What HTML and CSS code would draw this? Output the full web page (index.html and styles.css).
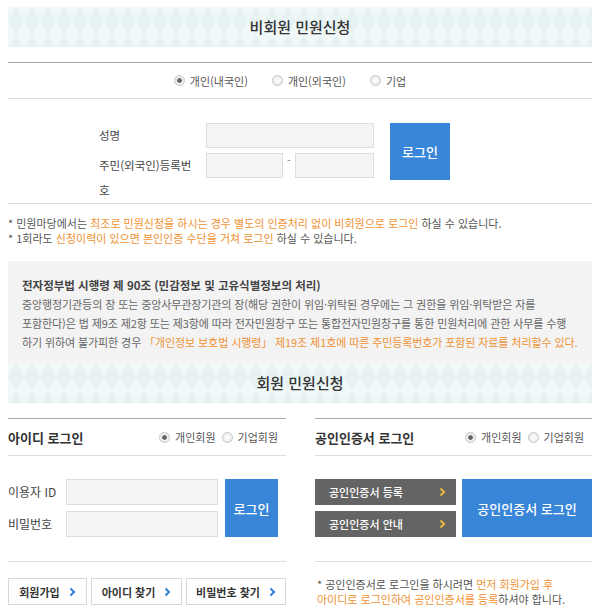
FILE: index.html
```html
<!DOCTYPE html>
<html lang="ko">
  <head>
    <meta charset="utf-8">
    <title>민원신청</title>
    <link rel="stylesheet" href="styles.css">
  </head>
  <body>
    <div class="band"><h2>비회원 민원신청</h2></div>

    <div class="type-row">
      <label class="opt"><span class="radio on"></span>개인(내국인)</label>
      <label class="opt"><span class="radio"></span>개인(외국인)</label>
      <label class="opt"><span class="radio"></span>기업</label>
    </div>

    <div class="nm-form">
      <span class="lbl name-lbl">성명</span>
      <span class="inp wide"></span>
      <a class="btn-blue nm-login">로그인</a>
      <span class="lbl jumin-lbl">주민(외국인)등록번<br>호</span>
      <span class="inp jumin-a"></span>
      <span class="dash">-</span>
      <span class="inp jumin-b"></span>
    </div>

    <ul class="notes">
      <li>* 민원마당에서는 <em>최조로 민원신청을 하시는 경우 별도의 인증처리 없이 비회원으로 로그인</em> 하실 수 있습니다.</li>
      <li>* 1회라도 <em>신청이력이 있으면 본인인증 수단을 거쳐 로그인</em> 하실 수 있습니다.</li>
    </ul>

    <div class="law">
      <strong>전자정부법 시행령 제 90조 (민감정보 및 고유식별정보의 처리)</strong><br>
      중앙행정기관등의 장 또는 중앙사무관장기관의 장(해당 권한이 위임·위탁된 경우에는 그 권한을 위임·위탁받은 자를<br>
      포함한다)은 법 제9조 제2항 또는 제3항에 따라 전자민원창구 또는 통합전자민원창구를 통한 민원처리에 관한 사무를 수행<br>
      하기 위하여 불가피한 경우 <em>「개인정보 보호법 시행령」 제19조 제1호에 따른 주민등록번호가 포함된 자료를 처리할수 있다.</em>
    </div>

    <div class="band"><h2>회원 민원신청</h2></div>

    <div class="members">
      <div class="panel">
        <div class="panel-head">
          <h3>아이디 로그인</h3>
          <div class="kinds">
            <label class="opt"><span class="radio on"></span>개인회원</label>
            <label class="opt"><span class="radio"></span>기업회원</label>
          </div>
        </div>
        <div class="panel-body id-form">
          <span class="lbl">이용자 ID</span>
          <span class="inp"></span>
          <a class="btn-blue id-login">로그인</a>
          <span class="lbl">비밀번호</span>
          <span class="inp"></span>
        </div>
        <div class="links">
          <a class="link-btn">회원가입 <svg width="7" height="10" viewBox="0 0 7 10"><polyline points="1.5,1.5 5,5 1.5,8.5" fill="none" stroke="#2f7fd4" stroke-width="2"/></svg></a>
          <a class="link-btn">아이디 찾기 <svg width="7" height="10" viewBox="0 0 7 10"><polyline points="1.5,1.5 5,5 1.5,8.5" fill="none" stroke="#2f7fd4" stroke-width="2"/></svg></a>
          <a class="link-btn">비밀번호 찾기 <svg width="7" height="10" viewBox="0 0 7 10"><polyline points="1.5,1.5 5,5 1.5,8.5" fill="none" stroke="#2f7fd4" stroke-width="2"/></svg></a>
        </div>
      </div>

      <div class="panel">
        <div class="panel-head">
          <h3>공인인증서 로그인</h3>
          <div class="kinds">
            <label class="opt"><span class="radio on"></span>개인회원</label>
            <label class="opt"><span class="radio"></span>기업회원</label>
          </div>
        </div>
        <div class="panel-body cert-form">
          <a class="btn-dark">공인인증서 등록 <svg width="7" height="10" viewBox="0 0 7 10"><polyline points="1.5,1.5 5,5 1.5,8.5" fill="none" stroke="#e6b73c" stroke-width="2"/></svg></a>
          <a class="btn-blue cert-login">공인인증서 로그인</a>
          <a class="btn-dark">공인인증서 안내 <svg width="7" height="10" viewBox="0 0 7 10"><polyline points="1.5,1.5 5,5 1.5,8.5" fill="none" stroke="#e6b73c" stroke-width="2"/></svg></a>
        </div>
        <p class="cert-note">* 공인인증서로 로그인을 하시려면 <em>먼저 회원가입 후<br>아이디로 로그인하여 공인인증서를 등록</em>하셔야 합니다.</p>
      </div>
    </div>
  </body>
</html>
```

FILE: styles.css
```css
body { margin: 7px 8px 0; font: normal 11px "Noto Sans CJK KR", "Noto Sans", sans-serif; color: #555; background: #fff; }
em { font-style: normal; color: #ef9233; }
a { cursor: pointer; }

.band { height: 40px; background-color: #e7f3f3; background-image: linear-gradient(60deg, #f0f8f8 25%, transparent 25.5%, transparent 75%, #f0f8f8 75.5%), linear-gradient(-60deg, #f0f8f8 25%, transparent 25.5%, transparent 75%, #f0f8f8 75.5%); background-size: 16px 28px; }
.band h2 { margin: 0; line-height: 40px; text-align: center; font-size: 15px; font-weight: 500; color: #333; }

.opt { display: inline-flex; align-items: center; gap: 5px; color: #555; }
.radio { width: 9px; height: 9px; border: 1px solid #c6c6c6; border-radius: 50%; background: radial-gradient(#fff, #e4e4e4); box-sizing: content-box; }
.radio.on { background: radial-gradient(circle, #666 0 2px, #eee 2.6px); }

.type-row { margin-top: 15px; height: 35px; border-top: 1px solid #a8a8a8; border-bottom: 1px solid #ddd; display: flex; justify-content: center; align-items: center; gap: 24px; padding-right: 20px; }

.nm-form { display: grid; grid-template-columns: 107px 77px 12px 79px 16px 60px; grid-template-rows: 25px 50px; row-gap: 5px; padding: 24px 0 0 91px; border-bottom: 1px solid #ddd; }
.nm-form .lbl { font-size: 11.5px; line-height: 25px; color: #444; }
.name-lbl { grid-column: 1; grid-row: 1; }
.jumin-lbl { grid-column: 1; grid-row: 2; }
.wide { grid-column: 2 / 5; grid-row: 1; }
.jumin-a { grid-column: 2; grid-row: 2; }
.dash { grid-column: 3; grid-row: 2; text-align: center; line-height: 14px; color: #888; }
.jumin-b { grid-column: 4; grid-row: 2; }
.nm-login { grid-column: 6; grid-row: 1 / 3; height: 57px; align-self: start; }
.inp { display: block; height: 25px; background: #f4f4f4; border: 1px solid #ddd; box-sizing: border-box; align-self: start; }

.btn-blue { display: flex; align-items: center; justify-content: center; background: #3985d8; color: #fff; font-size: 13px; font-weight: 500; }

.notes { list-style: none; margin: 0; padding: 12px 0 0; line-height: 15px; }

.law { margin-top: 15px; background: #f3f3f3; padding: 15px 14px 11px; line-height: 19px; color: #666; white-space: nowrap; letter-spacing: -0.1px; }
.law strong { color: #444; font-weight: 700; font-size: 11.5px; letter-spacing: 0; }

.members { display: flex; justify-content: space-between; margin-top: 15px; }
.panel { width: 278px; }
.panel + .panel { width: 277px; }
.panel-head { display: flex; justify-content: space-between; align-items: center; height: 36px; border-top: 1px solid #a8a8a8; border-bottom: 1px solid #ddd; padding-right: 8px; }
.panel-head h3 { margin: 0; font-size: 13px; font-weight: 700; color: #333; }
.kinds { display: flex; gap: 6px; }

.panel-body { display: grid; padding: 23px 0 24px; row-gap: 6px; border-bottom: 1px solid #ddd; }
.id-form { grid-template-columns: 58px 152px 60px; grid-template-rows: 26px 26px; }
.id-form .lbl { font-size: 12px; line-height: 26px; color: #444; }
.id-form .inp { height: 26px; }
.id-login { grid-column: 3; grid-row: 1 / 3; margin-left: 7px; }
.id-form .lbl + .inp { grid-column: 2; }

.links { display: flex; gap: 4px; padding-top: 16px; }
.link-btn { display: flex; align-items: center; justify-content: center; gap: 9px; height: 27px; border: 1px solid #d8d8d8; box-sizing: border-box; font-weight: 700; color: #333; background: #fff; }
.link-btn:nth-child(1) { width: 79px; }
.link-btn:nth-child(2) { width: 91px; }
.link-btn:nth-child(3) { width: 100px; }

.cert-form { grid-template-columns: 141px 130px; column-gap: 6px; grid-template-rows: 26px 26px; }
.btn-dark { display: flex; align-items: center; justify-content: space-between; padding: 0 10px 0 14px; background: #646464; color: #fff; font-weight: 500; }
.cert-login { grid-column: 2; grid-row: 1 / 3; }
.cert-note { margin: 0; padding: 15px 0 0 2px; line-height: 15px; }
```
